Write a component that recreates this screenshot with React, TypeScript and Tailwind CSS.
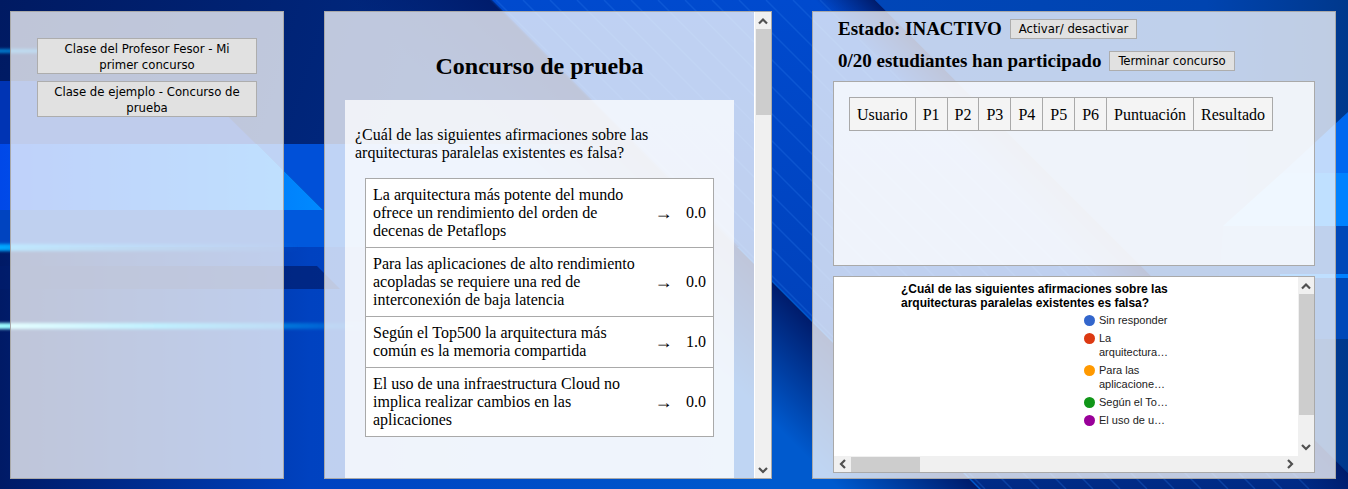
import React from "react";

type Dir = "up" | "down" | "left" | "right";
const arrows: Record<Dir, string> = {
  up: "M4 10.5 8 6.5l4 4",
  down: "M4 6l4 4 4-4",
  left: "M10 4 6 8l4 4",
  right: "M6 4l4 4-4 4",
};

function ScrollArrow({ dir, label }: { dir: Dir; label: string }) {
  return (
    <button type="button" aria-label={label} className="flex size-4 shrink-0 items-center justify-center">
      <svg viewBox="0 0 16 16" className="size-4" fill="none" stroke="#505050" strokeWidth="2.2">
        <path d={arrows[dir]} />
      </svg>
    </button>
  );
}

const stripes = Array.from({ length: 13 }, (_, i) => 496 + i * 27);

function Backdrop() {
  return (
    <svg
      aria-hidden="true"
      className="absolute inset-0 -z-10 size-full"
      viewBox="0 0 1348 489"
      preserveAspectRatio="none"
    >
      <defs>
        <linearGradient id="navy" x1="0" x2="500" y1="0" y2="160" gradientUnits="userSpaceOnUse">
          <stop offset="0" stopColor="#001a62" />
          <stop offset="1" stopColor="#002c88" />
        </linearGradient>
        <linearGradient id="low" x1="0" x2="774" y1="0" y2="0" gradientUnits="userSpaceOnUse">
          <stop offset="0" stopColor="#001a66" />
          <stop offset="0.4" stopColor="#0042c0" />
          <stop offset="1" stopColor="#005ace" />
        </linearGradient>
        <linearGradient id="beam" x1="0" x2="323" y1="0" y2="0" gradientUnits="userSpaceOnUse">
          <stop offset="0" stopColor="#0048e8" />
          <stop offset="1" stopColor="#008aff" />
        </linearGradient>
        <linearGradient id="glow" x1="0" x2="400" y1="0" y2="0" gradientUnits="userSpaceOnUse">
          <stop offset="0" stopColor="#a0ffff" />
          <stop offset="0.4" stopColor="#00c4ff" />
          <stop offset="1" stopColor="#00a0ff" stopOpacity="0" />
        </linearGradient>
        <linearGradient id="azure" x1="0" x2="300" y1="0" y2="0" gradientUnits="userSpaceOnUse">
          <stop offset="0" stopColor="#00a8ff" />
          <stop offset="1" stopColor="#0090ff" stopOpacity="0" />
        </linearGradient>
        <linearGradient id="shade" x1="735" x2="665" y1="245" y2="315" gradientUnits="userSpaceOnUse">
          <stop offset="0" stopColor="#001c6c" />
          <stop offset="1" stopColor="#001c6c" stopOpacity="0" />
        </linearGradient>
        <linearGradient id="band" x1="0" x2="0" y1="0" y2="489" gradientUnits="userSpaceOnUse">
          <stop offset="0" stopColor="#004ace" />
          <stop offset="0.65" stopColor="#0042bc" />
          <stop offset="1" stopColor="#002a84" />
        </linearGradient>
        <linearGradient id="fold" x1="875" x2="845" y1="0" y2="30" gradientUnits="userSpaceOnUse">
          <stop offset="0" stopColor="#001c6c" />
          <stop offset="1" stopColor="#001c6c" stopOpacity="0" />
        </linearGradient>
        <linearGradient id="east" x1="875" x2="1348" y1="0" y2="0" gradientUnits="userSpaceOnUse">
          <stop offset="0" stopColor="#0046b8" />
          <stop offset="0.7" stopColor="#0044b0" />
          <stop offset="1" stopColor="#00388c" />
        </linearGradient>
        <filter id="soft" x="-5%" y="-200%" width="110%" height="500%">
          <feGaussianBlur stdDeviation="0 1.6" />
        </filter>
      </defs>
      <path fill="url(#navy)" d="M0 0h1348v489H0z" />
      <path fill="#0034b4" d="M0 81h192l64 63H0z" />
      <path fill="#0050d8" d="M257 144h377l66 66H323z" />
      <path fill="url(#beam)" d="M0 144h257l66 66H0z" />
      <path fill="#0044c0" d="M0 210h700l37 37H0z" />
      <path fill="#0058dc" d="M284 210h100l37 37H284z" />
      <path fill="url(#low)" d="M0 247h740l242 242H0z" />
      <path fill="#001c6c" fillOpacity="0.7" d="M0 266h317l23 23H0z" />
      <path fill="url(#shade)" d="M300 0h190l489 489H300z" />
      <path fill="url(#band)" d="M492 0h383l489 489H981z" />
      {stripes.map((x) => (
        <path key={x} d={`M${x} 0l489 489`} stroke="#2878e8" strokeOpacity="0.3" strokeWidth="1.5" />
      ))}
      <path fill="url(#fold)" d="M800 0h75l489 489h-75z" />
      <path fill="url(#east)" d="M875 0h473v473z" />
      <path fill="#0048b8" d="M1223 226h125v113h-134z" />
      <path fill="#0068f0" d="M1348 112v61h-66z" />
      <path fill="#0082ff" d="M1282 173h66v53h-125z" />
      <path fill="#0080ff" d="M1280 274h68v4h-68z" />
      <path fill="url(#azure)" filter="url(#soft)" d="M0 49h180v4H0z" opacity="0.7" />
      <path fill="url(#azure)" filter="url(#soft)" d="M0 244h300v7H0z" />
      <path fill="url(#glow)" filter="url(#soft)" d="M0 323h460v6H0z" />
    </svg>
  );
}

const panel = "min-w-0 border border-[#a9a9a9] bg-white/75";
const button =
  "border border-[#adadad] bg-[#e1e1e1] text-[13px] leading-4 text-black [font-family:'DejaVu_Sans_Condensed','DejaVu_Sans',sans-serif]";

const answers = [
  ["La arquitectura más potente del mundo ofrece un rendimiento del orden de decenas de Petaflops", "0.0"],
  ["Para las aplicaciones de alto rendimiento acopladas se requiere una red de interconexión de baja latencia", "0.0"],
  ["Según el Top500 la arquitectura más común es la memoria compartida", "1.0"],
  ["El uso de una infraestructura Cloud no implica realizar cambios en las aplicaciones", "0.0"],
];

const columns = ["Usuario", "P1", "P2", "P3", "P4", "P5", "P6", "Puntuación", "Resultado"];

const legend = [
  { dot: "bg-[#3366cc]", lines: ["Sin responder"] },
  { dot: "bg-[#dc3912]", lines: ["La", "arquitectura…"] },
  { dot: "bg-[#ff9900]", lines: ["Para las", "aplicacione…"] },
  { dot: "bg-[#109618]", lines: ["Según el To…"] },
  { dot: "bg-[#990099]", lines: ["El uso de u…"] },
];

export default function App() {
  return (
    <div className="relative isolate grid h-screen grid-cols-[274fr_448fr_524fr] gap-10 overflow-hidden pt-[11px] pr-3 pb-2.5 pl-2.5 text-[16px] leading-[18px] text-black [font-family:'Liberation_Serif',serif]">
      <Backdrop />

      <nav aria-label="Concursos" className={`${panel} flex flex-col gap-[7px] px-[26px] pt-[26px]`}>
        <button type="button" className={`${button} px-3 pt-0.5`}>
          Clase del Profesor Fesor - Mi primer concurso
        </button>
        <button type="button" className={`${button} px-3 pt-0.5`}>
          Clase de ejemplo - Concurso de prueba
        </button>
      </nav>

      <main className={`${panel} flex min-h-0`}>
        <div className="flex min-w-0 flex-1 flex-col overflow-hidden px-5">
          <h1 className="pt-10 pb-5 text-center text-2xl leading-7 font-bold">Concurso de prueba</h1>
          <section className="flex-1 bg-white/75 px-2.5 pt-[26px]">
            <p className="pr-10">¿Cuál de las siguientes afirmaciones sobre las arquitecturas paralelas existentes es falsa?</p>
            <div className="px-2.5 pt-4">
              <table className="w-full border-collapse border border-[#a9a9a9] bg-white">
                <tbody>
                  {answers.map(([text, score]) => (
                    <tr key={text} className="border border-[#a9a9a9]">
                      <td className="py-[7px] pr-3 pl-[7px]">{text}</td>
                      <td className="w-7 text-center text-[18px] leading-[18px]">→</td>
                      <td className="w-9 pr-[7px] text-right">{score}</td>
                    </tr>
                  ))}
                </tbody>
              </table>
            </div>
          </section>
        </div>
        <div className="flex w-[17px] flex-col items-center border-l border-white bg-[#f0f0f0] pt-px">
          <ScrollArrow dir="up" label="Subir" />
          <div className="h-[86px] w-[15px] bg-[#cdcdcd]" />
          <div className="flex-1" />
          <ScrollArrow dir="down" label="Bajar" />
        </div>
      </main>

      <aside className={`${panel} flex min-h-0 flex-col pr-5 pb-[5px] pl-5`}>
        <div className="flex items-center gap-2 pt-[6px] pl-[5px]">
          <h2 className="text-[19px] leading-[22px] font-bold">Estado: INACTIVO</h2>
          <button type="button" className={`${button} px-2 py-px`}>Activar/ desactivar</button>
        </div>
        <div className="flex items-center gap-2 pt-2.5 pl-[5px]">
          <h2 className="text-[19px] leading-[22px] font-bold">0/20 estudiantes han participado</h2>
          <button type="button" className={`${button} px-2 py-px`}>Terminar concurso</button>
        </div>
        <section className="mt-[9px] h-[185px] shrink-0 border border-[#a9a9a9] bg-white/75 p-[15px]">
          <table className="border-collapse bg-[#f4f4f4]">
            <thead>
              <tr>
                {columns.map((c) => (
                  <th key={c} scope="col" className="border border-[#a9a9a9] px-[7px] pt-2 pb-1.5 font-normal">{c}</th>
                ))}
              </tr>
            </thead>
          </table>
        </section>
        <section className="mt-2.5 flex min-h-0 flex-1 border border-[#a9a9a9] bg-white [font-family:'Liberation_Sans',sans-serif]">
          <div className="flex min-w-0 flex-1 flex-col">
            <div className="min-h-0 flex-1 overflow-hidden pt-[5px] pl-[67px]">
              <h3 className="w-[280px] text-[12px] leading-[14px] font-bold">¿Cuál de las siguientes afirmaciones sobre las arquitecturas paralelas existentes es falsa?</h3>
              <ul className="flex flex-col gap-1 pt-[3px] pl-[183px] text-[11px] leading-[14px] text-[#222222]">
                {legend.map((item) => (
                  <li key={item.dot} className="flex gap-1">
                    <span className={`mt-0.5 size-[11px] shrink-0 rounded-full ${item.dot}`} />
                    <span>
                      {item.lines.map((l) => (
                        <span key={l} className="block">{l}</span>
                      ))}
                    </span>
                  </li>
                ))}
              </ul>
            </div>
            <div className="flex h-4 shrink-0 items-center bg-[#f0f0f0] pl-px">
              <ScrollArrow dir="left" label="Desplazar a la izquierda" />
              <div className="h-[15px] w-[69px] bg-[#cdcdcd]" />
              <div className="flex-1" />
              <ScrollArrow dir="right" label="Desplazar a la derecha" />
            </div>
          </div>
          <div className="flex w-4 flex-col items-center bg-[#f0f0f0] pt-px pb-[17px]">
            <ScrollArrow dir="up" label="Subir gráfico" />
            <div className="h-[121px] w-[15px] bg-[#cdcdcd]" />
            <div className="flex-1" />
            <ScrollArrow dir="down" label="Bajar gráfico" />
          </div>
        </section>
      </aside>
    </div>
  );
}
